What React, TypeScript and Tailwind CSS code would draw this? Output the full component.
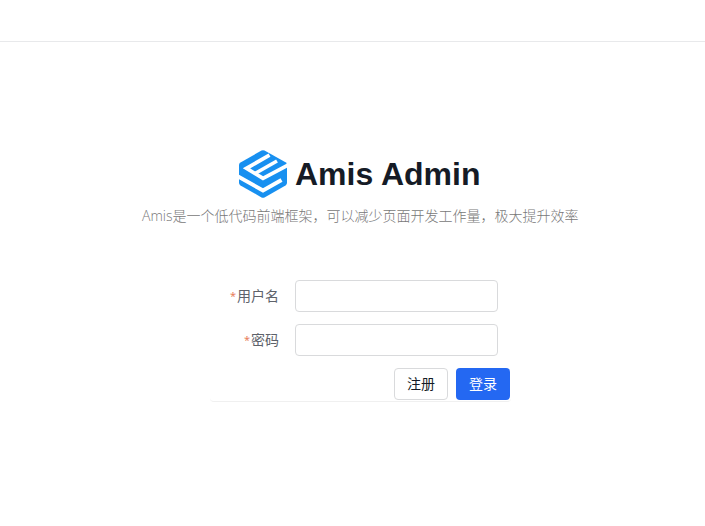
function Logo() {
  return (
    <svg className="h-12 w-12" viewBox="0 0 48 48" fill="none" aria-hidden="true">
      <path d="M22.5 0.6Q24 -0.2 25.5 0.6L46.5 12.3Q48 13.2 48 15V33Q48 34.5 46.5 35.4L25.5 47.4Q24 48.2 22.5 47.4L1.5 35.4Q0 34.5 0 33V15Q0 13.3 1.5 12.4Z" fill="#1890f0" />
      <g stroke="#fff" strokeWidth="4">
        <path d="M30.5 5.2L7.5 18.3L24 28.4L50 14.6" strokeWidth="3.8" />
        <path d="M16 23.5L38 11" strokeWidth="3.6" />
        <path d="M-1 26.5L24 40.5L42.5 30" />
      </g>
    </svg>
  );
}

function Field({ label, type }: { label: string; type: string }) {
  return (
    <label className="flex h-8 items-center">
      <span className="mr-4 flex w-[68px] items-center justify-end text-[14px] leading-5 text-[#5e626a]">
        <span className="mr-px font-['Noto_Sans',sans-serif] text-[11px] leading-5 text-[#e8805c]">*</span>
        {label}
      </span>
      <input type={type} className="h-8 w-[203px] rounded border border-[#d9dadc] bg-white px-3 text-sm outline-none" />
    </label>
  );
}

export default function App() {
  return (
    <div className="h-[526px] overflow-hidden bg-white font-['Liberation_Sans','Noto_Sans_CJK_SC',sans-serif]">
      <header className="h-[42px] border-b border-[#e8e9eb]" />
      <main className="flex flex-col pt-[108px]">
        <div className="flex h-12 items-center pl-[239px]">
          <Logo />
          <h1 className="ml-2 whitespace-nowrap text-[32px] font-bold leading-[48px] text-[#151b26]">Amis Admin</h1>
        </div>
        <p className="mt-2 whitespace-nowrap pl-[142px] font-['Open_Sans','Noto_Sans_CJK_SC',sans-serif] text-[14px] font-light leading-5 text-[#787878]">
          Amis是一个低代码前端框架，可以减少页面开发工作量，极大提升效率
        </p>
        <form className="ml-[210px] mt-[54px] flex h-[122px] w-[301px] flex-col gap-3 rounded border-b border-[#f0f0f0] pl-px">
          <Field label="用户名" type="text" />
          <Field label="密码" type="password" />
          <div className="flex justify-end gap-2 pr-px">
            <button type="button" className="h-8 w-[54px] rounded border border-[#d9dadc] bg-white text-[14px] leading-5 text-[#151b26]">注册</button>
            <button type="button" className="h-8 w-[54px] rounded bg-[#2468f2] text-[14px] leading-5 text-white">登录</button>
          </div>
        </form>
      </main>
    </div>
  );
}
